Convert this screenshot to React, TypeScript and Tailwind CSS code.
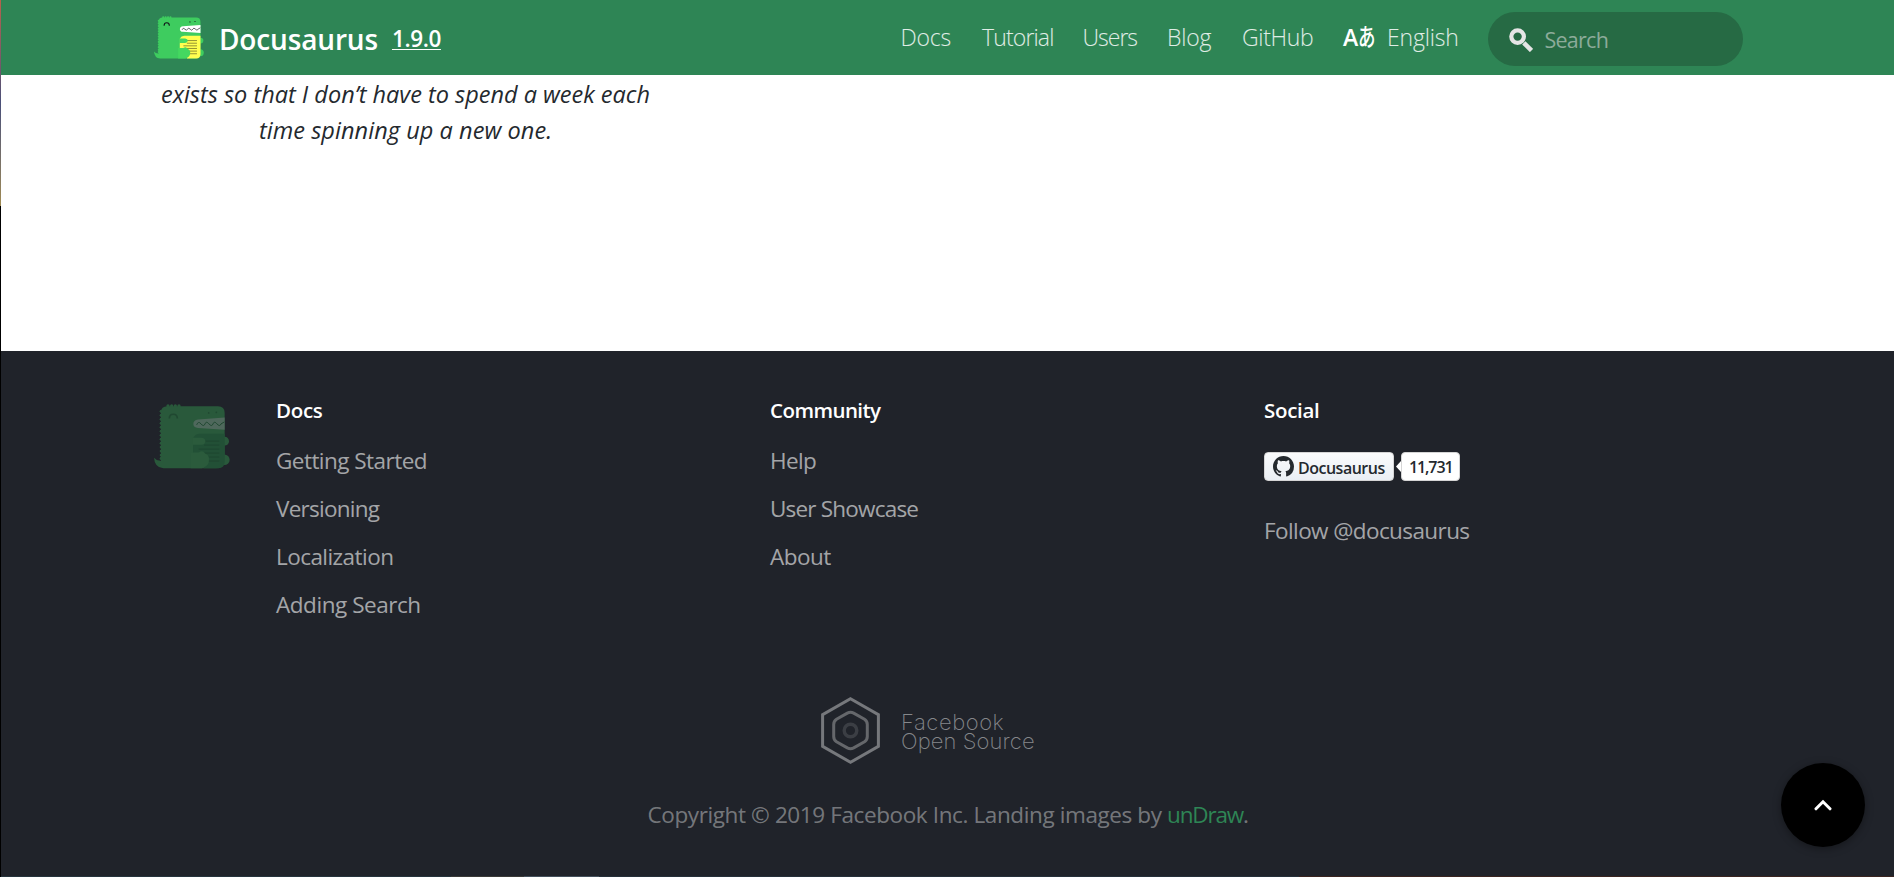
import type { ReactNode } from "react";

type DinoColors = { body: string; limb: string; book: string; line: string; mouth: string; ink: string };

const bright: DinoColors = { body: "#3ecc5f", limb: "#44d860", book: "#ffff50", line: "#5b5a20", mouth: "#ffffff", ink: "#101518" };
const muted: DinoColors = { body: "#29593b", limb: "#2b5b3c", book: "#225036", line: "#1e4530", mouth: "#4f685c", ink: "#204831" };

function Dino({ colors, className }: { colors: DinoColors; className: string }) {
  const back = [22, 34, 46, 58, 70, 82, 94, 106, 118, 130, 142, 154, 164];
  const head = [40, 51, 62, 73];
  return (
    <svg viewBox="0 0 228 196" preserveAspectRatio="none" className={className} aria-hidden="true">
      <g fill={colors.body}>
        {back.map((y) => (
          <circle key={y} cx="22" cy={y} r="5" />
        ))}
        {head.map((x) => (
          <circle key={x} cx={x + 2} cy="6" r="5" />
        ))}
        <path d="M21 26Q21 7 40 7H192Q212 7 212 27V170Q210 194 186 194H28Q2 192 0 162Q8 172 21 171Z" />
        <circle cx="212" cy="112" r="13" />
        <circle cx="211" cy="168" r="16" />
      </g>
      <path d="M212 41L132 47Q118 49 118 60Q118 71 132 72L212 78Z" fill={colors.mouth} />
      <path d="M128 63Q133 50 141 60T153 60T165 60T177 60T189 60T201 60L211 54" fill="none" stroke={colors.ink} strokeWidth="3" />
      <path d="M46 44Q46 31 58 31Q70 31 70 44" fill="none" stroke={colors.ink} strokeWidth="5" />
      <circle cx="164" cy="27" r="2.6" fill={colors.ink} />
      <circle cx="187" cy="25" r="2.6" fill={colors.ink} />
      <path d="M118 102Q124 90 138 90H212V176Q210 194 194 194H150V148H118Z" fill={colors.book} />
      <path d="M118 124H150V148H118Z" fill={colors.book} />
      <path d="M150 112H196M150 124H196M134 136H196M150 148H196M160 160H196M160 172H196" stroke={colors.line} strokeWidth="3" />
      <path d="M116 102H142Q154 103 154 112Q154 122 142 123H116Z" fill={colors.limb} />
      <path d="M110 146H134Q146 138 154 150Q166 154 165 168Q166 186 144 194H110Z" fill={colors.limb} />
    </svg>
  );
}

const navItems = [
  { label: "Docs", style: "w-[81.5px] tracking-[-0.25px]" },
  { label: "Tutorial", style: "w-[100.5px] tracking-[-0.85px]" },
  { label: "Users", style: "w-[84.5px] tracking-[-1px]" },
  { label: "Blog", style: "w-[75px] tracking-[-0.2px]" },
  { label: "GitHub", style: "w-[101px] tracking-[-0.35px]" },
];

const docs = [
  { label: "Getting Started", style: "tracking-[-0.54px]" },
  { label: "Versioning", style: "tracking-[-0.75px]" },
  { label: "Localization", style: "tracking-[-0.55px]" },
  { label: "Adding Search", style: "tracking-[-0.45px]" },
];

const community = [
  { label: "Help", style: "tracking-[-0.6px]" },
  { label: "User Showcase", style: "tracking-[-0.8px]" },
  { label: "About", style: "tracking-[-0.5px]" },
];

function Header() {
  return (
    <header className="flex h-[75px] items-center bg-[#2e8555] pl-[153px] text-white">
      <Dino colors={bright} className="h-[43px] w-[50px]" />
      <a href="#" className="flex w-[696.5px] items-center pt-[3px] pl-[15px]">
        <span className="text-[28px] leading-9 font-semibold tracking-[-0.15px]">Docusaurus</span>
        <span className="ml-[14px] text-[22.5px] leading-[26px] font-semibold tracking-[-0.39px] underline decoration-1 underline-offset-[2px]">1.9.0</span>
      </a>
      <nav className="mb-px flex items-center text-[23px] leading-9 font-light text-white/85">
        {navItems.map((n) => (
          <a key={n.label} href="#" className={n.style}>
            {n.label}
          </a>
        ))}
        <a href="#" className="flex w-[145px] items-center tracking-[-0.2px]">
          <span className="flex w-[44px] items-center text-white">
            <span className="text-[23px] font-semibold tracking-normal">A</span>
            <span className="inline-block w-[15px] origin-left scale-x-[0.7] pb-[5px] font-['Noto_Sans_CJK_JP',sans-serif] text-[25px] font-medium">あ</span>
          </span>
          English
        </a>
      </nav>
      <div className="mt-[3px] flex h-[54px] w-[255px] items-center rounded-full bg-[#266a44] pl-[21px]">
        <svg viewBox="0 0 24 24" className="mt-px h-6 w-6" fill="none" stroke="#e5e5e5">
          <circle cx="8.6" cy="8.6" r="6.3" strokeWidth="4.2" />
          <path d="M14.8 14.8L22.5 22.5" strokeWidth="4.6" />
        </svg>
        <span className="ml-[11.5px] pt-[3px] text-[21.5px] tracking-[-0.75px] text-[#8cab9a]">Search</span>
      </div>
    </header>
  );
}

function Column({ title, titleStyle, children }: { title: string; titleStyle: string; children: ReactNode }) {
  return (
    <div className="flex w-[494px] flex-col">
      <h5 className={`text-[20.5px] leading-6 font-semibold text-white ${titleStyle}`}>{title}</h5>
      {children}
    </div>
  );
}

function Links({ items }: { items: { label: string; style: string }[] }) {
  return (
    <div className="mt-[15px] flex flex-col text-[22.5px] leading-[48px] text-white/60">
      {items.map((i) => (
        <a key={i.label} href="#" className={i.style}>
          {i.label}
        </a>
      ))}
    </div>
  );
}

function GitHubButton() {
  return (
    <div className="mt-[30px] flex h-[29px] items-stretch text-[16px] font-semibold text-[#24292e]">
      <a href="#" className="flex w-[130px] items-center rounded-[4px] border border-[#d5d5d5] bg-linear-to-b from-[#fafbfc] to-[#eaeff4] pl-2">
        <svg viewBox="0 0 16 16" className="h-[21px] w-[21px]" fill="#24292e">
          <path d="M8 0C3.58 0 0 3.58 0 8c0 3.54 2.29 6.53 5.47 7.59.4.07.55-.17.55-.38 0-.19-.01-.82-.01-1.49-2.01.37-2.53-.49-2.69-.94-.09-.23-.48-.94-.82-1.13-.28-.15-.68-.52-.01-.53.63-.01 1.08.58 1.23.82.72 1.21 1.87.87 2.33.66.07-.52.28-.87.51-1.07-1.78-.2-3.64-.89-3.64-3.95 0-.87.31-1.59.82-2.15-.08-.2-.36-1.02.08-2.12 0 0 .67-.21 2.2.82.64-.18 1.32-.27 2-.27.68 0 1.36.09 2 .27 1.53-1.04 2.2-.82 2.2-.82.44 1.1.16 1.92.08 2.12.51.56.82 1.27.82 2.15 0 3.07-1.87 3.75-3.65 3.95.29.25.54.73.54 1.48 0 1.07-.01 1.93-.01 2.2 0 .21.15.46.55.38A8.013 8.013 0 0016 8c0-4.42-3.58-8-8-8z" />
        </svg>
        <span className="ml-1 pt-[2px] tracking-[-0.5px]">Docusaurus</span>
      </a>
      <svg viewBox="0 0 7 29" className="w-[7px]">
        <path d="M7 9L2 14.5L7 20Z" fill="#ffffff" />
      </svg>
      <a href="#" className="flex w-[59px] items-center rounded-[4px] border border-[#d5d5d5] bg-white pl-[7px] tracking-[-1.1px]">
        11,731
      </a>
    </div>
  );
}

function Footer() {
  return (
    <footer className="flex h-[525px] flex-col bg-[#20232a] pt-[47px]">
      <div className="flex h-[230px] pl-[153px]">
        <Dino colors={muted} className="mt-[6px] h-[65px] w-[76px]" />
        <div className="flex pl-[46px]">
          <Column title="Docs" titleStyle="tracking-[-0.33px]">
            <Links items={docs} />
          </Column>
          <Column title="Community" titleStyle="tracking-[-0.55px]">
            <Links items={community} />
          </Column>
          <Column title="Social" titleStyle="tracking-[-0.3px]">
            <GitHubButton />
            <a href="#" className="mt-[26px] text-[22.5px] leading-[48px] tracking-[-0.59px] text-white/60">
              Follow @docusaurus
            </a>
          </Column>
        </div>
      </div>
      <a href="#" className="mt-[69px] flex h-[67px] pl-[820px]">
        <svg viewBox="0 0 59 67" className="h-[67px] w-[59px]" fill="none">
          <path d="M29.5 1.8L57.4 17.7V49.3L29.5 65.2L1.6 49.3V17.7Z" stroke="#76787c" strokeWidth="3" />
          <path d="M26.3 16.1Q29.5 14.5 32.7 16.1L43.5 22.3Q46.3 24.2 46.3 27.5V39.5Q46.3 42.8 43.5 44.7L32.7 50.9Q29.5 52.5 26.3 50.9L15.5 44.7Q12.7 42.8 12.7 39.5V27.5Q12.7 24.2 15.5 22.3Z" stroke="#65676b" strokeWidth="3" />
          <circle cx="29.5" cy="33.5" r="6.3" stroke="#3b3e44" strokeWidth="3.4" />
        </svg>
        <span className="flex flex-col pt-[16px] pl-[21px] font-['Inter'] text-[22px] leading-[19px] font-extralight text-[#85878a]">
          <span className="tracking-[0.55px]">Facebook</span>
          <span className="tracking-[0.1px]">Open Source</span>
        </span>
      </a>
      <p className="mt-[33px] pl-[646.5px] text-[22.5px] leading-9 text-white/40">
        <span className="tracking-[-0.39px]">Copyright © 2019 Facebook Inc. Landing images by </span>
        <a href="#" className="tracking-[-1.2px] text-[#2e8555]">
          unDraw
        </a>
        .
      </p>
    </footer>
  );
}

export default function App() {
  return (
    <div className="relative flex h-[877px] w-[1894px] overflow-hidden bg-black font-['Open_Sans',sans-serif]">
      <div className="h-[206px] w-px bg-linear-to-b from-[#b8604a] via-[#4a4f78] to-[#a08a50]" />
      <div className="flex flex-1 flex-col">
        <Header />
        <main className="h-[276px] bg-white pt-px pl-[104px]">
          <blockquote className="w-[601px] text-center text-[23.5px] leading-9 text-[#24292e] italic">
            exists so that I don’t have to spend a week each
            <br />
            <span className="tracking-[0.06px]">time spinning up a new one.</span>
          </blockquote>
        </main>
        <Footer />
        <div className="flex h-px bg-[#3a2420]">
          <div className="w-[450px] bg-[#26343d]" />
          <div className="w-[73px] bg-[#3a3a38]" />
          <div className="w-[75px] bg-[#44505c]" />
          <div className="w-[700px] bg-[#26303a]" />
        </div>
      </div>
      <button className="absolute top-[763px] left-[1781px] flex h-[84px] w-[84px] items-center justify-center rounded-full bg-black shadow-[0_2px_8px_rgba(0,0,0,0.35)]">
        <svg viewBox="0 0 18 12" className="h-3 w-[18px]" fill="none" stroke="#ffffff" strokeWidth="3" strokeLinecap="round">
          <path d="M2 9.8L9 2.8L16 9.8" />
        </svg>
      </button>
    </div>
  );
}
